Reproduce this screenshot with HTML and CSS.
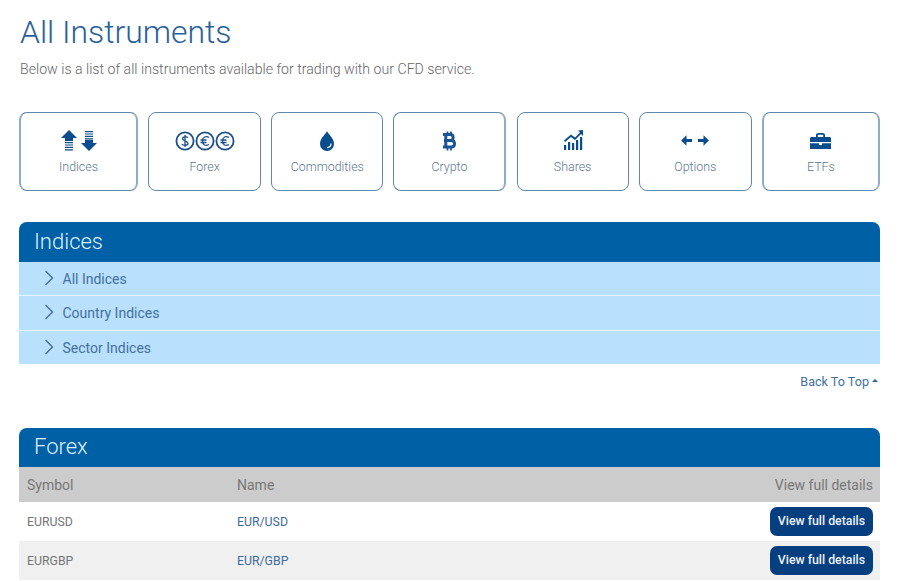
FILE: index.html
```html
<!DOCTYPE html>
<html lang="en">
<head>
<meta charset="utf-8">
<title>All Instruments</title>
<link rel="stylesheet" href="styles.css">
</head>
<body>
<main class="page">
  <h1 class="title">All Instruments</h1>
  <p class="intro">Below is a list of all instruments available for trading with our CFD service.</p>

  <nav class="tiles">
    <a class="tile t-indices">
      <svg class="ico" width="38" height="22" viewBox="0 0 38 22"><g fill="#0a4d8f"><path d="M1 8 9 0l8 8h-4v3H5V8z"/><path d="M5 12h8v1.200H5zM5 14.400h8v1.200H5zM5 16.800h8V18H5zM5 19.200h8v1.200H5z"/><path d="M21 13l8 8 8-8h-4v-3h-8v3z"/><path d="M25 1h8v1.200h-8zM25 3.400h8v1.200h-8zM25 5.800h8V7h-8zM25 8.200h8v1.200h-8z"/></g></svg>
      <span>Indices</span>
    </a>
    <a class="tile t-forex">
      <svg class="ico" width="60" height="22" viewBox="0 0 60 22"><g fill="none" stroke="#1d4f8a" stroke-width="1.800"><circle cx="10" cy="11" r="8.600"/><circle cx="30" cy="11" r="8.600"/><circle cx="50" cy="11" r="8.600"/><path stroke-width="1.300" d="M13 7.500c-1-1-5.500-1.200-5.500 1.300S13 11 13 13.500s-5 2-6.200.6M10 5v12M34 7.500c-3-2-6.500-.5-6.500 3.500s3.500 5.500 6.500 3.500M25.500 10h6M25.500 12.500h6M54 7.500c-3-2-6.500-.5-6.500 3.500s3.500 5.500 6.500 3.500M45.500 10h6M45.500 12.500h6"/></g></svg>
      <span>Forex</span>
    </a>
    <a class="tile t-commodities">
      <svg class="ico" width="16" height="22" viewBox="0 0 16 22"><path fill="#0a4d8f" d="M8 1c1 3 7 7 7 13a7 7 0 0 1-14 0C1 8 7 4 8 1z"/><path fill="none" stroke="#fff" stroke-width="1.200" d="M12 13.500c0 2.500-1.500 4-4 4.200"/></svg>
      <span>Commodities</span>
    </a>
    <a class="tile t-crypto">
      <svg class="ico" width="16" height="22" viewBox="0 0 16 22"><path fill="none" stroke="#1a5595" stroke-width="3" d="M2 4.500h7.500c3.500 0 3.500 6 0 6H5m-2 0h7.500c4 0 4 6.500 0 6.500H2M4.800 4v13.500"/><path fill="none" stroke="#1a5595" stroke-width="1.800" d="M6.500 1.500v3M10 1.500v3M6.500 17v3.500M10 17v3.500"/></svg>
      <span>Crypto</span>
    </a>
    <a class="tile t-shares">
      <svg class="ico" width="20" height="22" viewBox="0 1 20 22"><g fill="#0a4d8f"><path d="M1 16h2.200v5H1zM5 13h2.200v8H5zM9 14h2.200v7H9zM13 11h2.200v10H13zM17 8h2.200v13H17z"/><path d="M20 1v6l-2-2-6 6-4-3-6 5-1-1.500 7-6 4 3 5-5-2-2z"/></g></svg>
      <span>Shares</span>
    </a>
    <a class="tile t-options">
      <svg class="ico" width="28" height="22" viewBox="0 0 28 22"><g fill="#0a4d8f"><path d="M0 10.500l5.500-5.200v3.600H11v3.200H5.500v3.600zM28 10.500l-5.500-5.200v3.600H17v3.200h5.500v3.600z"/></g></svg>
      <span>Options</span>
    </a>
    <a class="tile t-etfs">
      <svg class="ico" width="21" height="22" viewBox="0 0 21 22"><path fill="#0a4d8f" fill-rule="evenodd" d="M6 7V5.200C6 3.800 7 3 8.500 3h4C14 3 15 3.800 15 5.200V7h4.500c.8 0 1.500.7 1.500 1.500V12H0V8.500C0 7.700.7 7 1.500 7zm1.800 0h5.400V5.200c0-.3-.2-.5-.7-.5h-4c-.5 0-.7.2-.7.5zM0 13.200h9V15h3v-1.800h9V19H0z"/></svg>
      <span>ETFs</span>
    </a>
  </nav>

  <section class="panel panel-indices">
    <h2 class="panel-head">Indices</h2>
    <ul class="acc">
      <li class="acc-row"><svg class="chev" width="10" height="16" viewBox="0 0 10 16"><path fill="none" stroke="#3f6a97" stroke-width="1.300" d="M1.500 1l7 7-7 7"/></svg>All Indices</li>
      <li class="acc-row"><svg class="chev" width="10" height="16" viewBox="0 0 10 16"><path fill="none" stroke="#3f6a97" stroke-width="1.300" d="M1.500 1l7 7-7 7"/></svg>Country Indices</li>
      <li class="acc-row"><svg class="chev" width="10" height="16" viewBox="0 0 10 16"><path fill="none" stroke="#3f6a97" stroke-width="1.300" d="M1.500 1l7 7-7 7"/></svg>Sector Indices</li>
    </ul>
  </section>
  <div class="back"><a>Back To Top</a><span class="caret"></span></div>

  <section class="panel">
    <h2 class="panel-head">Forex</h2>
    <div class="row row-head"><span class="c1">Symbol</span><span class="c2">Name</span><span class="c3">View full details</span></div>
    <div class="row"><span class="c1">EURUSD</span><a class="c2">EUR/USD</a><a class="btn">View full details</a></div>
    <div class="row alt"><span class="c1">EURGBP</span><a class="c2">EUR/GBP</a><a class="btn">View full details</a></div>
  </section>
</main>
</body>
</html>
```

FILE: styles.css
```css
* { box-sizing: border-box; }
html, body { margin: 0; padding: 0; background: #fff; height: 581px; overflow: hidden; }
body { font-family: Roboto, "Liberation Sans", sans-serif; color: #666; }
.page { width: 861px; margin-left: 19px; }
.title { margin: 0; padding: 13px 0 0 1px; font-size: 31.900px; line-height: 38px; font-weight: 300; color: #2a6198; }
.intro { margin: 9px 0 0 1px; font-size: 14.150px; line-height: 19px; font-weight: 300; color: #666; }
.tiles { display: flex; justify-content: space-between; margin-top: 33px; }
.tile { height: 79px; border: 1px solid #5f88ae; border-radius: 8px; display: flex; flex-direction: column; align-items: center; padding-top: 17px; font-size: 12.400px; font-weight: 300; color: #5a7790; }
.tile span { margin-top: 7px; line-height: 16px; }
.ico { display: block; }
.t-indices { width: 119px; border-left: 2px solid #8fadc9; border-right: 2px solid #8fadc9; }
.t-forex { width: 113px; }
.t-commodities { width: 112px; }
.t-crypto { width: 113px; border-right: 2px solid #8fadc9; }
.t-shares { width: 112px; }
.t-options { width: 113px; }
.t-etfs { width: 118px; border-left: 2px solid #8fadc9; border-right: 2px solid #8fadc9; }
.panel-indices { margin-top: 31px; }
.panel-head { margin: 0; height: 40px; padding-left: 15px; background: #0060a5; border-radius: 8px 8px 0 0; color: #dff0fc; font-size: 22px; line-height: 39px; font-weight: 300; }
.acc { list-style: none; margin: 0; padding: 0; }
.acc-row { height: 34px; display: flex; align-items: center; padding-left: 25px; background: #b9e0fd; border-bottom: 1px solid #e6f4fe; color: #44709c; font-size: 14px; }
.acc-row:nth-child(2) { height: 35px; }
.acc-row:last-child { height: 33px; border-bottom: 0; }
.chev { margin-right: 8.500px; position: relative; top: -1px; }
.back { height: 64px; padding: 9px 2px 0 0; display: flex; justify-content: flex-end; font-size: 12.600px; line-height: 18px; color: #44709c; }
.caret { width: 0; height: 0; margin: 6px 0 0 3px; border: 3.500px solid transparent; border-top: 0; border-bottom: 3.500px solid #33628f; }
.panel:last-child .panel-head { height: 39px; line-height: 38px; }
.row { display: flex; align-items: center; height: 39px; padding: 0 7px 0 8px; font-size: 12.300px; color: #757575; }
.row.alt { background: #f0f0f0; }
.row-head { height: 35px; background: #ccc; font-size: 14px; color: #777; }
.c1 { width: 210px; }
.c2 { flex: 1; }
a.c2 { color: #3f6a9c; }
.btn { height: 29px; padding: 0 8px 2px; display: flex; align-items: center; background: #063f80; color: #eef3f9; border-radius: 7px; font-weight: 500; font-size: 12.300px; }
```
